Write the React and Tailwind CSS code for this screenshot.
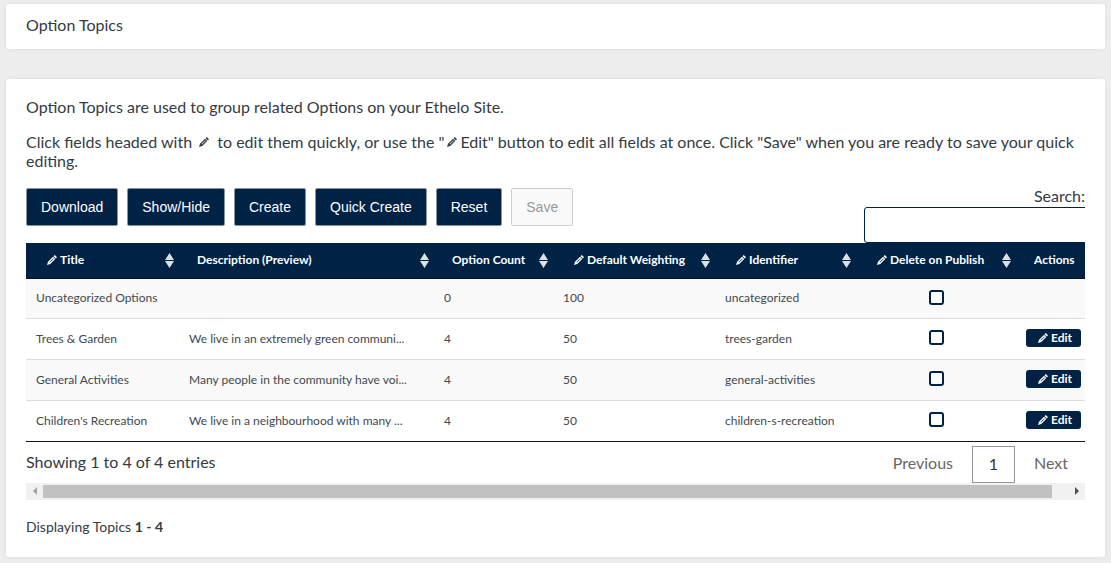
import React, { useState } from 'react';

const topics = [
  { title: 'Uncategorized Options', description: '', count: 0, weighting: 100, identifier: 'uncategorized', editable: false },
  { title: 'Trees & Garden', description: 'We live in an extremely green communi...', count: 4, weighting: 50, identifier: 'trees-garden', editable: true },
  { title: 'General Activities', description: 'Many people in the community have voi...', count: 4, weighting: 50, identifier: 'general-activities', editable: true },
  { title: "Children's Recreation", description: 'We live in a neighbourhood with many ...', count: 4, weighting: 50, identifier: 'children-s-recreation', editable: true },
];

const columns = [
  { label: 'Title', width: 'w-[153px]', quickEdit: true, sortable: true },
  { label: 'Description (Preview)', width: '', sortable: true },
  { label: 'Option Count', width: 'w-[119px]', sortable: true },
  { label: 'Default Weighting', width: 'w-[162px]', quickEdit: true, sortable: true },
  { label: 'Identifier', width: 'w-[141px]', quickEdit: true, sortable: true },
  { label: 'Delete on Publish', width: 'w-[160px]', quickEdit: true, sortable: true },
  { label: 'Actions', width: 'w-[86px]' },
];

const toolbar = ['Download', 'Show/Hide', 'Create', 'Quick Create', 'Reset'];

const Pencil = ({ className = '' }) => (
  <svg viewBox="0 0 20 20" className={`inline-block size-[10px] shrink-0 ${className}`} fill="currentColor" aria-hidden="true">
    <path d="M0 20l2-6.500L12 3.500l4.500 4.500-10 10L0 20z M5 14.200l.8.8 7.400-7.200-.8-.8L5 14.200z" fillRule="evenodd" />
    <path d="M13 2.500L15.500 0 20 4.500 17.500 7 13 2.500z" />
  </svg>
);

const SortIcon = () => (
  <svg viewBox="0 0 9 15" className="h-[15px] w-[9px] shrink-0" fill="#dcdfe4" aria-hidden="true">
    <path d="M4.500 0L9 7H0z M0 8h9l-4.500 7z" />
  </svg>
);

const TopicRow = ({ topic, index }) => {
  const [checked, setChecked] = useState(false);

  return (
    <tr className={`h-[41px] border-t border-[#dddddd] first:h-10 first:border-t-0 ${index % 2 === 0 ? 'bg-[#f9f9f9]' : 'bg-white'}`}>
      <td className="px-2.5">{topic.title}</td>
      <td className="px-2.5">{topic.description}</td>
      <td className="px-2.5">{topic.count}</td>
      <td className="px-2.5">{topic.weighting}</td>
      <td className="px-2.5">{topic.identifier}</td>
      <td className="px-2.5 pb-0.5">
        <input
          type="checkbox"
          checked={checked}
          onChange={() => setChecked(!checked)}
          aria-label={`Delete ${topic.title} on publish`}
          className="mx-auto block size-[15px] appearance-none rounded-[3px] border-2 border-[#002244] bg-white checked:bg-[#002244]"
        />
      </td>
      <td className="px-2.5 pb-0.5">
        {topic.editable && (
          <button type="button" className="flex h-[18px] w-[55px] items-center justify-end gap-[3px] rounded-[3px] bg-[#002244] pr-[9px] text-xs font-bold text-white">
            <Pencil />
            Edit
          </button>
        )}
      </td>
    </tr>
  );
};

const TopicsTable = () => (
  <table className="w-[calc(100%+17px)] table-fixed border-collapse border-b border-[#111111] text-xs text-[#42494e]">
    <colgroup>
      {columns.map((column) => (
        <col key={column.label} className={column.width} />
      ))}
    </colgroup>
    <thead>
      <tr className="h-[35px] border-b border-[#111111] bg-[#002244] text-white">
        {columns.map((column) => (
          <th key={column.label} scope="col" className="p-0 pr-[5px] pl-[18px] text-left font-bold whitespace-nowrap">
            <div className="flex items-center justify-between">
              <span className="flex items-center gap-[3px]">
                {column.quickEdit && <Pencil className="ml-[3px]" />}
                {column.label}
              </span>
              {column.sortable && <SortIcon />}
            </div>
          </th>
        ))}
      </tr>
    </thead>
    <tbody>
      {topics.map((topic, index) => (
        <TopicRow key={topic.identifier} topic={topic} index={index} />
      ))}
    </tbody>
  </table>
);

const ScrollBar = () => (
  <div className="flex h-[17px] items-center bg-[#f1f1f1]">
    <button type="button" aria-label="Scroll left" className="flex h-full w-[17px] items-center justify-center text-[#a3a3a3]">
      <svg viewBox="0 0 4 8" className="h-2 w-1" fill="currentColor"><path d="M4 0v8L0 4z" /></svg>
    </button>
    <div className="h-[13px] flex-1 bg-[#c1c1c1]" />
    <div className="w-4" />
    <button type="button" aria-label="Scroll right" className="flex h-full w-[17px] items-center justify-center text-[#505050]">
      <svg viewBox="0 0 4 8" className="h-2 w-1" fill="currentColor"><path d="M0 0v8l4-4z" /></svg>
    </button>
  </div>
);

const App = () => {
  const [search, setSearch] = useState('');

  return (
    <div className="min-h-screen bg-[#ededed] px-1.5 pt-1 pb-1.5 font-['Lato',sans-serif] text-base/[19px] text-[#333b41]">
      <header className="rounded-[3px] bg-white px-5 pt-[11px] pb-[15px] shadow-[0_0_4px_rgba(0,0,0,0.08)]">
        <h1>Option Topics</h1>
      </header>

      <main className="mt-[30px] rounded-[3px] bg-white px-5 pt-[18px] pb-[21px] shadow-[0_0_4px_rgba(0,0,0,0.08)]">
        <p>Option Topics are used to group related Options on your Ethelo Site.</p>
        <p className="mt-4">
          Click fields headed with <Pencil className="mr-1 ml-[3px] align-[1px]" /> to edit them quickly, or use the "<Pencil className="mx-[3px] align-[1px]" />Edit"
          button to edit all fields at once. Click "Save" when you are ready to save your quick editing.
        </p>

        <div className="mt-4 overflow-hidden">
          <div className="flex items-start justify-between">
            <div className="mt-0.5 flex gap-[9px] font-['Liberation_Sans',Arial,sans-serif] text-sm">
              {toolbar.map((label) => (
                <button key={label} type="button" className="h-[38px] rounded-xs border border-[#8a929c] bg-[#002244] px-3.5 text-white">
                  {label}
                </button>
              ))}
              <button type="button" disabled className="h-[38px] rounded-xs border border-[#cccccc] bg-[#f9f9f9] px-3.5 text-[#999999]">
                Save
              </button>
            </div>
            <div className="w-[221px]">
              <label htmlFor="topic-search" className="block text-right">Search:</label>
              <input
                id="topic-search"
                type="search"
                value={search}
                onChange={(e) => setSearch(e.target.value)}
                className="mt-0.5 block h-9 w-[238px] rounded-[3px] border border-[#002244] bg-white px-2"
              />
            </div>
          </div>

          <TopicsTable />

          <div className="flex items-start justify-between">
            <p className="pt-2.5">Showing 1 to 4 of 4 entries</p>
            <nav className="mt-1 flex text-[#666666]" aria-label="Pagination">
              <button type="button" className="px-[19px] pb-1">Previous</button>
              <button type="button" aria-current="page" className="h-[37px] w-[43px] border border-[#979797] pb-0.5 text-[#333333]">1</button>
              <button type="button" className="pr-[17px] pb-1 pl-[19px]">Next</button>
            </nav>
          </div>
        </div>
        <ScrollBar />

        <p className="mt-[17px] text-sm/[19px]">
          Displaying Topics <b>1 - 4</b>
        </p>
      </main>
    </div>
  );
};

export default App;
